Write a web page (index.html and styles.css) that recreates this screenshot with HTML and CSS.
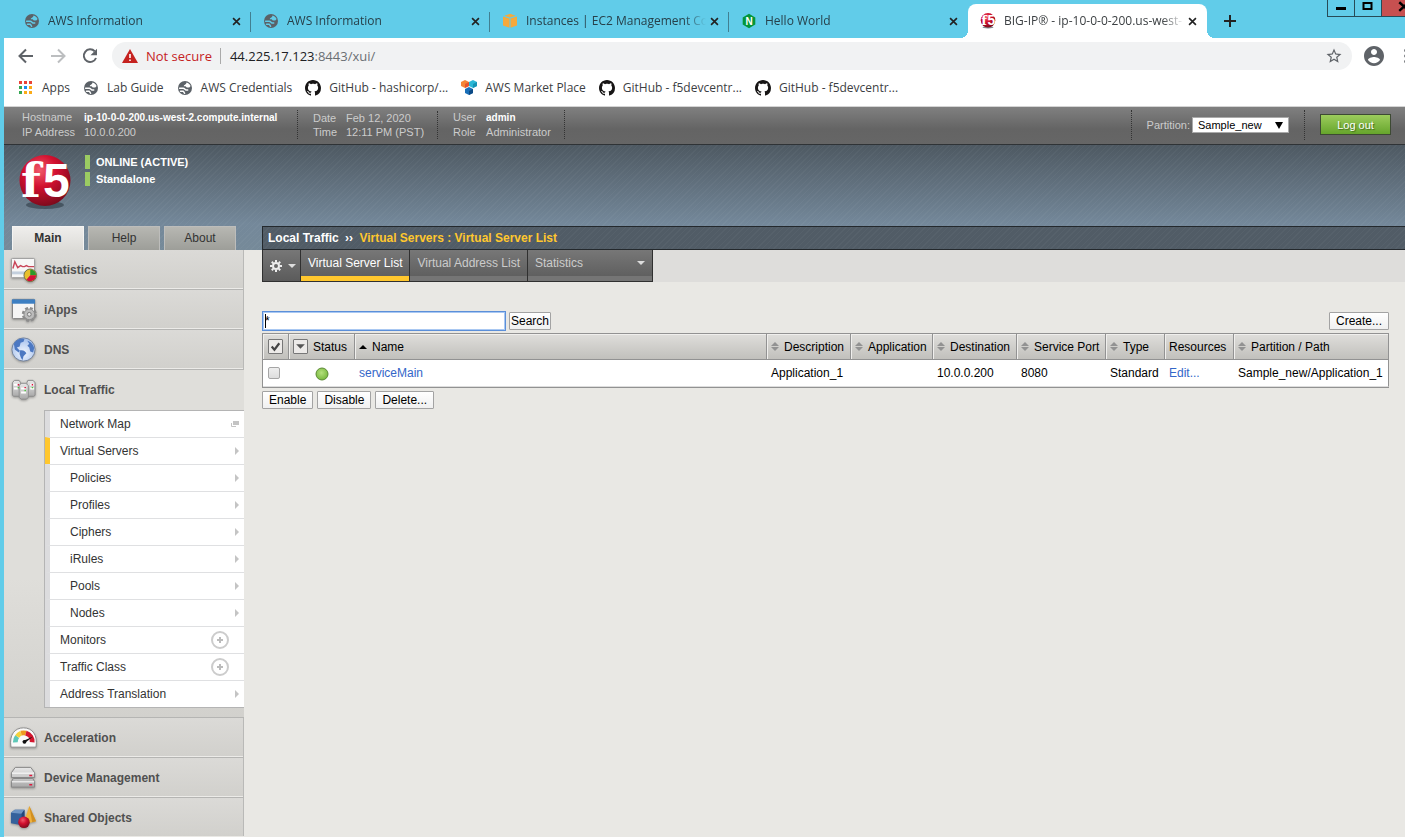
FILE: index.html
```html
<!DOCTYPE html>
<html lang="en">
<head>
<meta charset="utf-8">
<title>BIG-IP® - ip-10-0-0-200.us-west-2.compute.internal</title>
<link rel="stylesheet" href="styles.css">
</head>
<body>
<svg class="defs" width="0" height="0" aria-hidden="true">
  <defs>
    <radialGradient id="ball" cx="40%" cy="30%" r="72%">
      <stop offset="0" stop-color="#f0596b"/><stop offset=".45" stop-color="#d2102f"/><stop offset="1" stop-color="#7c0a1c"/>
    </radialGradient>
    <radialGradient id="sea" cx="50%" cy="65%" r="60%">
      <stop offset="0" stop-color="#f2f6fd"/><stop offset="1" stop-color="#a9c3ee"/>
    </radialGradient>
    <linearGradient id="metal" x1="0" x2="0" y1="0" y2="1">
      <stop offset="0" stop-color="#e8e8e8"/><stop offset="1" stop-color="#a9a9a9"/>
    </linearGradient>
    <radialGradient id="green" cx="45%" cy="40%" r="60%">
      <stop offset="0" stop-color="#b4e07c"/><stop offset="1" stop-color="#78b83e"/>
    </radialGradient>
    <symbol id="globe" viewBox="0 0 16 16">
      <circle cx="8" cy="8" r="7" fill="#5b6167"/>
      <path fill="currentColor" d="M9.500 2.500c1.900.4 3.400 1.700 4.100 3.400l-1.300 1.600H9.800L8.600 6.200H6.800c0-1.500 2.400-1.200 2.700-3.700z"/>
      <path fill="none" stroke="currentColor" stroke-width="1.500" stroke-linecap="round" d="M2.600 8.200h3.600c1.300 0 1.600 1.500 2.700 1.700h1.800M3.500 11.200h2.600c.9.200.8 1.400 1.500 2"/>
    </symbol>
    <symbol id="octocat" viewBox="0 0 16 16"><path fill="#171515" fill-rule="evenodd" d="M8 0C3.580 0 0 3.580 0 8c0 3.540 2.290 6.530 5.470 7.590.4.070.550-.170.550-.380 0-.190-.010-.820-.010-1.490-2.010.370-2.530-.490-2.690-.940-.090-.230-.480-.940-.820-1.130-.280-.150-.680-.520-.010-.530.630-.010 1.080.580 1.230.820.720 1.210 1.870.870 2.330.660.070-.520.280-.870.510-1.070-1.780-.2-3.640-.890-3.640-3.950 0-.870.310-1.590.820-2.150-.080-.2-.360-1.020.080-2.120 0 0 .670-.210 2.200.820.640-.180 1.320-.270 2-.270.680 0 1.360.090 2 .270 1.530-1.040 2.200-.820 2.200-.820.440 1.100.160 1.920.080 2.120.510.560.820 1.270.820 2.150 0 3.070-1.870 3.750-3.650 3.950.290.250.540.730.540 1.480 0 1.070-.010 1.930-.010 2.200 0 .210.150.460.550.380A8.013 8.013 0 0 0 16 8c0-4.420-3.580-8-8-8z"/></symbol>
    <symbol id="cross" viewBox="0 0 10 10"><path stroke="currentColor" stroke-width="1.800" d="M1.200 1.200l7.600 7.600M8.800 1.200L1.200 8.800"/></symbol>
    <symbol id="f5" viewBox="0 0 54 56">
      <ellipse cx="27" cy="50" rx="19" ry="4" fill="#2d3a45" opacity=".6"/>
      <circle cx="27" cy="25.500" r="25.500" fill="url(#ball)"/>
      <text x="3" y="42" font-family="DejaVu Serif" font-weight="700" font-size="46" fill="#fff">f</text>
      <text x="25" y="42" font-family="Liberation Sans" font-weight="700" font-size="48" fill="#fff">5</text>
    </symbol>
    <symbol id="plus" viewBox="0 0 18 18"><circle cx="9" cy="9" r="8" fill="#fff" stroke="#ccc" stroke-width="2"/><path d="M9 6v6M6 9h6" stroke="#bbb" stroke-width="2"/></symbol>
    <symbol id="chev" viewBox="0 0 4 8"><path d="M0 0l4 4-4 4z" fill="#c4c4c4"/></symbol>
    <symbol id="sort" viewBox="0 0 8 9"><path d="M4 0l4 4H0zM0 5h8L4 9z" fill="#929292"/></symbol>
  </defs>
</svg>

<header class="browser">
  <div class="tabstrip">
    <div class="tab"><svg class="i16"><use href="#globe"/></svg><span class="tab-title">AWS Information</span><button class="close" aria-label="Close tab"><svg><use href="#cross"/></svg></button></div>
    <div class="tab"><svg class="i16"><use href="#globe"/></svg><span class="tab-title">AWS Information</span><button class="close" aria-label="Close tab"><svg><use href="#cross"/></svg></button></div>
    <div class="tab"><svg class="i16" viewBox="0 0 16 16"><path fill="#f6a93b" d="M8 .8l5.500 1.900L8 4.600 2.500 2.700zM1 3.400l6.500 2v9.400L1 12.400zM15 3.400l-6.500 2v9.400l6.500-2.400z"/></svg><span class="tab-title">Instances | EC2 Management Con</span><button class="close" aria-label="Close tab"><svg><use href="#cross"/></svg></button></div>
    <div class="tab last"><svg class="i16" viewBox="0 0 16 16"><path fill="#049639" d="M8 .8l6.300 3.600v7.200L8 15.200l-6.300-3.600V4.400z"/><text x="4.400" y="11.800" font-family="Liberation Sans" font-weight="700" font-size="10" fill="#fff">N</text></svg><span class="tab-title">Hello World</span><button class="close" aria-label="Close tab"><svg><use href="#cross"/></svg></button></div>
    <div class="tab active"><svg class="i16"><use href="#f5"/></svg><span class="tab-title">BIG-IP® - ip-10-0-0-200.us-west-</span><button class="close" aria-label="Close tab"><svg><use href="#cross"/></svg></button></div>
    <button class="newtab" aria-label="New tab"><svg viewBox="0 0 12 12"><path d="M6 0v12M0 6h12" stroke="#222" stroke-width="2"/></svg></button>
    <div class="wincontrols">
      <button class="win min" aria-label="Minimize"><svg viewBox="0 0 26 16"><path d="M8 8.500h10" stroke="#000" stroke-width="3"/></svg></button>
      <button class="win max" aria-label="Maximize"><svg viewBox="0 0 26 16"><rect x="8.500" y="3" width="8" height="6" fill="none" stroke="#000" stroke-width="2"/></svg></button>
      <button class="win shut" aria-label="Close window"><svg viewBox="0 0 24 16"><path d="M18 2l10 9M28 2l-10 9" stroke="#000" stroke-width="2.500"/></svg></button>
    </div>
  </div>
  <div class="toolbar">
    <button class="nav" aria-label="Back"><svg viewBox="0 0 16 16"><path d="M15 8H2M8 1.500L1.500 8 8 14.500" fill="none" stroke="#5f6368" stroke-width="2"/></svg></button>
    <button class="nav" aria-label="Forward"><svg viewBox="0 0 16 16"><path d="M1 8h13M8 1.500L14.500 8 8 14.500" fill="none" stroke="#bcbec0" stroke-width="2"/></svg></button>
    <button class="nav" aria-label="Reload"><svg viewBox="0 0 16 16"><path d="M12.700 3.300A6.300 6.300 0 1 0 14 10" fill="none" stroke="#5f6368" stroke-width="2"/><path d="M15 .8v6.500H8.500z" fill="#5f6368"/></svg></button>
    <div class="omnibox">
      <svg class="warn" viewBox="0 0 16 14"><path d="M8 0l8 14H0z" fill="#c5221f"/><path d="M8 5v4M8 10.500v1.500" stroke="#fff" stroke-width="1.600"/></svg>
      <span class="notsecure">Not secure</span>
      <span class="url"><b>44.225.17.123</b>:8443/xui/</span>
      <svg class="star" viewBox="0 0 24 24"><path fill="#5f6368" d="M22 9.240l-7.190-.620L12 2 9.190 8.630 2 9.240l5.460 4.730L5.820 21 12 17.270 18.180 21l-1.630-7.030L22 9.240zM12 15.400l-3.760 2.270 1-4.280-3.320-2.880 4.380-.380L12 6.100l1.710 4.040 4.380.380-3.320 2.880 1 4.280L12 15.400z"/></svg>
    </div>
    <button class="avatar" aria-label="Profile"><svg viewBox="2 2 20 20"><path fill="#5f6368" d="M12 2C6.480 2 2 6.480 2 12s4.480 10 10 10 10-4.480 10-10S17.520 2 12 2zm0 3c1.660 0 3 1.340 3 3s-1.340 3-3 3-3-1.340-3-3 1.340-3 3-3zm0 14.200c-2.500 0-4.710-1.280-6-3.220.030-1.990 4-3.080 6-3.080 1.990 0 5.970 1.090 6 3.080-1.290 1.940-3.500 3.220-6 3.220z"/></svg></button>
    <button class="kebab" aria-label="Menu"><svg viewBox="0 0 4 16"><circle cx="2" cy="2.500" r="1.800" fill="#5f6368"/><circle cx="2" cy="8" r="1.800" fill="#5f6368"/><circle cx="2" cy="13.500" r="1.800" fill="#5f6368"/></svg></button>
  </div>
  <nav class="bookmarks">
    <a href="#"><svg class="i16" viewBox="0 0 16 16"><path fill="#ea4335" d="M1 1h3v3H1zM6 1h3v3H6zM11 1h3v3h-3z"/><path fill="#34a853" d="M1 6h3v3H1zM1 11h3v3H1z"/><path fill="#1a8df0" d="M6 6h3v3H6z"/><path fill="#fbab18" d="M11 6h3v3h-3zM6 11h3v3H6zM11 11h3v3h-3z"/></svg>Apps</a>
    <a href="#"><svg class="i16"><use href="#globe"/></svg>Lab Guide</a>
    <a href="#"><svg class="i16"><use href="#globe"/></svg>AWS Credentials</a>
    <a href="#"><svg class="i16"><use href="#octocat"/></svg>GitHub - hashicorp/...</a>
    <a href="#"><svg class="i16" viewBox="0 0 16 16"><path fill="#f58536" d="M4 0l4 2v4L4 8 0 6V2z"/><path fill="#e5532d" d="M4 4l4-2v4L4 8z"/><path fill="#2ab7d6" d="M12 0l4 2v4l-4 2-4-2V2z"/><path fill="#1593b5" d="M12 4l4-2v4l-4 2z"/><path fill="#1a6fb8" d="M8 7l4 2v4l-4 2-4-2V9z"/><path fill="#0c4a85" d="M8 11l4-2v4l-4 2z"/></svg>AWS Market Place</a>
    <a href="#"><svg class="i16"><use href="#octocat"/></svg>GitHub - f5devcentr...</a>
    <a href="#"><svg class="i16"><use href="#octocat"/></svg>GitHub - f5devcentr...</a>
  </nav>
</header>

<div class="app">
  <div class="hostbar">
    <dl class="facts host"><dt>Hostname</dt><dd><b>ip-10-0-0-200.us-west-2.compute.internal</b></dd><dt>IP Address</dt><dd>10.0.0.200</dd></dl>
    <dl class="facts time"><dt>Date</dt><dd>Feb 12, 2020</dd><dt>Time</dt><dd>12:11 PM (PST)</dd></dl>
    <dl class="facts user"><dt>User</dt><dd><b>admin</b></dd><dt>Role</dt><dd>Administrator</dd></dl>
    <div class="partition"><label for="part">Partition:</label><span class="pick"><select id="part"><option>Sample_new</option></select></span></div>
    <div class="session"><button class="logout">Log out</button></div>
  </div>

  <div class="banner">
    <div class="identity">
      <div class="brand">
        <svg class="logo"><use href="#f5"/></svg>
        <div class="state"><span>ONLINE (ACTIVE)</span><span>Standalone</span></div>
      </div>
      <div class="sidetabs"><button class="on">Main</button><button>Help</button><button>About</button></div>
    </div>
    <h1 class="crumb">Local Traffic <i>››</i> <em>Virtual Servers : Virtual Server List</em></h1>
  </div>

  <div class="body">
    <nav class="side">
      <a class="head" href="#"><svg class="ic" viewBox="0 0 28 28"><rect x="1.500" y="2.500" width="24" height="20" rx="1" fill="#f7f7f7" stroke="#999"/><path d="M2 17.500h23" stroke="#c3cfdd" stroke-width="3"/><path d="M3 13l2-7 3 6 3-2 2 1h2l2-1 2 1h6" fill="none" stroke="#c9465a" stroke-width="1.500"/><circle cx="21" cy="20" r="6.500" fill="#e9bf2b" stroke="#6b6b4b"/><path d="M21 20v-6a6 6 0 0 1 6 6z" fill="#2c9a2a"/><path d="M21 20h6a6 6 0 0 1-10 4.500z" fill="#d4103a"/></svg>Statistics</a>
      <a class="head" href="#"><svg class="ic" viewBox="0 0 28 28"><rect x="2.500" y="3.500" width="23" height="20" rx="1" fill="#f5f5f5" stroke="#777"/><path d="M2 3.500h24V8H2z" fill="#3d7fc2"/><circle cx="20" cy="19" r="6.500" fill="none" stroke="#8c8c8c" stroke-width="2.500" stroke-dasharray="3 2.100"/><circle cx="20" cy="19" r="5.500" fill="#bcbcbc" stroke="#8a8a8a"/><circle cx="20" cy="19" r="2" fill="#e4e4e4" stroke="#777"/></svg>iApps</a>
      <a class="head" href="#"><svg class="ic" viewBox="0 0 28 28"><circle cx="14" cy="14" r="12" fill="url(#sea)" stroke="#74839c"/><path fill="#4c78c2" d="M4 8c3-5 8-6 11-5l-1 3-3 1-1 4-3 1 3 3-1 2-4-3zM10 15c4-1 6 1 7 3l-3 3-1 4c-2-2-2-4-3-6zM18 5c4 1 7 5 7 8l-1 4-3-1-1-4-2-2 2-2z"/></svg>DNS</a>
      <section class="open">
        <a class="head" href="#"><svg class="ic" viewBox="0 0 28 28"><g fill="url(#metal)" stroke="#8b8b8b"><path d="M2.500 6l2-2.500h5L11 6v14h-7l-1.500-1zM17.500 6l1-2.500h5.500L26 6v13l-1.500 1h-7z"/><path d="M9.500 9l2-2.500h5L19 9v12l-2 2h-5.500l-2-2z"/></g><path d="M4 8h4M4 12h4M21 8h4M21 12h4M11.500 12h5M11.500 16h5" stroke="#fff" stroke-width="2"/><path d="M8 8h1.500M22.500 8H24M15 11h1.500" stroke="#e0143c" stroke-width="1.500"/><path d="M8 11h1.500M22.500 11H24M15 14h1.500" stroke="#4bc33e" stroke-width="1.500"/></svg>Local Traffic</a>
        <ul class="menu">
          <li><a href="#">Network Map<svg class="pop" viewBox="0 0 8 6"><path d="M2 0h6v4H2z" fill="#c4c4c4"/><path d="M.5 2v3.500H5" fill="none" stroke="#c4c4c4"/></svg></a></li>
          <li class="current"><a href="#">Virtual Servers<svg class="chev"><use href="#chev"/></svg></a></li>
          <li class="sub"><a href="#">Policies<svg class="chev"><use href="#chev"/></svg></a></li>
          <li class="sub"><a href="#">Profiles<svg class="chev"><use href="#chev"/></svg></a></li>
          <li class="sub"><a href="#">Ciphers<svg class="chev"><use href="#chev"/></svg></a></li>
          <li class="sub"><a href="#">iRules<svg class="chev"><use href="#chev"/></svg></a></li>
          <li class="sub"><a href="#">Pools<svg class="chev"><use href="#chev"/></svg></a></li>
          <li class="sub"><a href="#">Nodes<svg class="chev"><use href="#chev"/></svg></a></li>
          <li><a href="#">Monitors<svg class="add"><use href="#plus"/></svg></a></li>
          <li><a href="#">Traffic Class<svg class="add"><use href="#plus"/></svg></a></li>
          <li><a href="#">Address Translation<svg class="chev"><use href="#chev"/></svg></a></li>
        </ul>
      </section>
      <a class="head" href="#"><svg class="ic" viewBox="0 0 28 28"><path d="M1 24C-1 11 5 4 14 4s15 7 13 20z" fill="#fafafa" stroke="#888"/><g fill="none" stroke-width="5"><path d="M5.500 19a9 9 0 0 1 2-6" stroke="#5ec8b8"/><path d="M7.500 13a9 9 0 0 1 4-3.500" stroke="#f3d13c"/><path d="M11.500 9.500a9 9 0 0 1 5 0" stroke="#ee9a20"/><path d="M16.500 9.500a9 9 0 0 1 6.500 9.500" stroke="#d3172f"/></g><path d="M24 13l-9 7-2-2z" fill="#111"/><circle cx="15" cy="18.500" r="2" fill="#111"/></svg>Acceleration</a>
      <a class="head" href="#"><svg class="ic" viewBox="0 0 28 28"><g fill="url(#metal)" stroke="#858585"><path d="M1.500 9l4-5.500h16l4 5.500v5h-24zM1.500 18l2-3h20l2 3v6h-24z"/></g><path d="M2 9.500h23M2 18.500h23" stroke="#fff"/><path d="M20 12h3M20 21.500h3" stroke="#df1a3c" stroke-width="1.500"/></svg>Device Management</a>
      <a class="head" href="#"><svg class="ic" viewBox="0 0 28 28"><path d="M1 9l4-3h10v13l-3 3-11-2z" fill="#35619b"/><path d="M1 9l11 1 3-4H5z" fill="#6f95c4"/><path d="M12 10l3-4v13l-3 3z" fill="#23467a"/><path d="M20 2l7 16-8 2-4-3z" fill="#f0b23c"/><path d="M20 2l7 16-4 1z" fill="#d18f22"/><circle cx="14.500" cy="19" r="6" fill="url(#ball)"/></svg>Shared Objects</a>
    </nav>

    <main class="content">
      <div class="pagetabs">
        <button class="gear" aria-label="Options"><svg class="cog" viewBox="0 0 12 12"><circle cx="6" cy="6" r="3" fill="none" stroke="#eee" stroke-width="2"/><path d="M6 0v2M6 10v2M0 6h2M10 6h2M1.800 1.800l1.400 1.400M8.800 8.800l1.400 1.400M10.200 1.800L8.800 3.200M3.200 8.800l-1.400 1.400" stroke="#eee" stroke-width="2"/></svg><svg class="down" viewBox="0 0 8 4"><path d="M0 0h8L4 4z" fill="#ddd"/></svg></button>
        <a class="on" href="#">Virtual Server List</a>
        <a href="#">Virtual Address List</a>
        <a class="wide" href="#">Statistics<svg class="down" viewBox="0 0 8 4"><path d="M0 0h8L4 4z" fill="#ddd"/></svg></a>
      </div>

      <form class="listing">
        <div class="searchrow">
          <input type="text" class="query" value="*" aria-label="Search virtual servers">
          <button type="button" class="tight">Search</button>
          <button type="button" class="create">Create...</button>
        </div>
        <table>
          <colgroup><col class="c-check"><col class="c-status"><col><col class="c-desc"><col class="c-app"><col class="c-desc"><col class="c-port"><col class="c-type"><col class="c-res"><col class="c-path"></colgroup>
          <thead><tr>
            <th class="mid"><button type="button" class="mini" aria-label="Select all"><svg viewBox="0 0 12 12"><path d="M2.500 6l2.500 3 4.500-6" fill="none" stroke="#444" stroke-width="2"/></svg></button></th>
            <th><span class="lab"><button type="button" class="mini" aria-label="Filter status"><svg viewBox="0 0 12 12"><path d="M2 4h8L6 8z" fill="#555"/></svg></button>Status</span></th>
            <th><span class="lab"><svg class="up" viewBox="0 0 8 4"><path d="M4 0l4 4H0z" fill="#000"/></svg>Name</span></th>
            <th><span class="lab"><svg class="sort"><use href="#sort"/></svg>Description</span></th>
            <th><span class="lab"><svg class="sort"><use href="#sort"/></svg>Application</span></th>
            <th><span class="lab"><svg class="sort"><use href="#sort"/></svg>Destination</span></th>
            <th><span class="lab"><svg class="sort"><use href="#sort"/></svg>Service Port</span></th>
            <th><span class="lab"><svg class="sort"><use href="#sort"/></svg>Type</span></th>
            <th><span class="lab">Resources</span></th>
            <th><span class="lab"><svg class="sort"><use href="#sort"/></svg>Partition / Path</span></th>
          </tr></thead>
          <tbody><tr>
            <td class="tick"><input type="checkbox" aria-label="Select serviceMain"></td>
            <td class="mid"><svg class="dot" viewBox="0 0 14 14" role="img" aria-label="Available"><circle cx="7" cy="7" r="6" fill="url(#green)" stroke="#5b8a34"/></svg></td>
            <td><a href="#">serviceMain</a></td>
            <td>Application_1</td><td></td><td>10.0.0.200</td><td>8080</td><td>Standard</td><td><a href="#">Edit...</a></td><td>Sample_new/Application_1</td>
          </tr></tbody>
        </table>
        <div class="actions"><button type="button">Enable</button><button type="button">Disable</button><button type="button">Delete...</button></div>
      </form>
    </main>
  </div>
</div>
</body>
</html>
```
FILE: styles.css
```css
* { box-sizing: border-box; }
html, body { height: 100%; }
body {
  margin: 0;
  padding-left: 4px;
  display: flex;
  flex-direction: column;
  overflow: hidden;
  background: #61cce9;
  font: 12px/14px "Liberation Sans", Arial, sans-serif;
  color: #000;
}
svg { display: block; flex: none; }
.defs { position: absolute; }
button { font: inherit; cursor: pointer; }
a { text-decoration: none; }
.i16 { width: 16px; height: 16px; }

/* Browser chrome */
.browser { font: 12px/16px "Open Sans", "Noto Sans", sans-serif; color: #333; }
.tabstrip { display: flex; height: 38px; padding: 4px 0 0 8px; }
.tab {
  display: flex;
  align-items: center;
  flex: 0 1 239px;
  min-width: 0;
  padding: 0 10px 0 12px;
  position: relative;
  color: #61cce9;
}
.tab:not(.last):not(.active)::after {
  content: "";
  position: absolute;
  right: 0;
  top: 8px;
  height: 20px;
  width: 1px;
  background: #417f91;
}
.tab-title {
  flex: 1;
  margin: 0 4px 0 8px;
  white-space: nowrap;
  overflow: hidden;
  color: #27404a;
  -webkit-mask-image: linear-gradient(90deg, #000 88%, transparent);
  mask-image: linear-gradient(90deg, #000 88%, transparent);
}
.tab.active { background: #fff; border-radius: 8px 8px 0 0; color: #fff; }
.tab.active .tab-title { color: #3c4043; }
.tab.active::before,
.tab.active::after {
  content: "";
  position: absolute;
  bottom: 0;
  width: 8px;
  height: 8px;
}
.tab.active::before { left: -8px; background: radial-gradient(circle at 0 0, transparent 8px, #fff 8px); }
.tab.active::after { right: -8px; background: radial-gradient(circle at 100% 0, transparent 8px, #fff 8px); }
.close, .newtab, .nav, .avatar, .kebab { border: 0; padding: 0; background: none; }
.close { color: #222; }
.close svg { width: 9px; height: 9px; }
.newtab { margin-left: 17px; }
.newtab svg { width: 12px; height: 12px; }
.wincontrols { display: flex; margin: -4px 0 0 auto; height: 17px; }
.win {
  width: 27px;
  padding: 0;
  border: 1px solid #274b57;
  border-width: 0 0 1px 1px;
  background: none;
  overflow: hidden;
}
.win svg { width: 100%; height: 16px; }
.win.shut { background: #c75050; width: 24px; }

.toolbar {
  display: flex;
  align-items: center;
  gap: 16px;
  height: 36px;
  padding-left: 14px;
  background: #fff;
}
.nav svg { width: 16px; height: 16px; }
.omnibox {
  flex: 1;
  display: flex;
  align-items: center;
  height: 28px;
  margin-left: -2px;
  padding: 0 9px 0 10px;
  border-radius: 14px;
  background: #f1f2f3;
  font-size: 13px;
}
.warn { width: 16px; height: 14px; }
.notsecure {
  margin: 0 9px 0 8px;
  padding-right: 8px;
  border-right: 1px solid #aaa;
  color: #c5221f;
}
.url { flex: 1; color: #6b6f73; }
.url b { font-weight: 400; color: #202124; }
.star { width: 18px; height: 18px; }
.omnibox + .avatar { margin-left: -4px; }
.avatar svg { width: 20px; height: 20px; }
.kebab { width: 4px; margin: 0 -3px 0 5px; }
.kebab svg { width: 4px; height: 16px; }
.avatar + .kebab { margin-left: 4px; }

.bookmarks {
  display: flex;
  gap: 13px;
  height: 33px;
  padding: 0 0 5px 14px;
  background: #fff;
  border-bottom: 1px solid #d4d4d4;
}
.bookmarks a {
  display: flex;
  align-items: center;
  gap: 8px;
  color: #3c4043;
  white-space: nowrap;
}
.bookmarks svg { color: #fff; }

/* Host information bar */
.app { flex: 1; display: flex; flex-direction: column; background: #e9e8e4; min-height: 0; }
.hostbar {
  display: flex;
  align-items: center;
  height: 38px;
  padding-bottom: 2px;
  background: linear-gradient(#808080, #646464 60%, #666);
  border-bottom: 1px solid #2f3336;
  font-size: 11px;
  color: #ccc;
}
.facts {
  display: grid;
  margin: 0;
  padding: 0 13px 0 15px;
  border-right: 1px dotted #333;
  white-space: nowrap;
}
.host { grid-template-columns: 62px 200px; padding-left: 18px; }
.time { grid-template-columns: 33px auto; }
.user { grid-template-columns: 33px auto; }
.facts dd { margin: 0; }
.facts b { color: #fff; font-size: 10px; }
.partition, .session { display: flex; align-items: center; height: 30px; border-left: 1px dotted #333; }
.partition { margin-left: auto; padding: 0 15px; }
.partition label { margin-right: 2px; }
.pick { position: relative; display: flex; }
.pick::after {
  content: "";
  position: absolute;
  right: 6px;
  top: 5px;
  border: 4px solid transparent;
  border-top: 7px solid #000;
  border-bottom: 0;
  pointer-events: none;
}
.partition select {
  appearance: none;
  width: 97px;
  height: 16px;
  padding: 0 5px;
  border: 1px solid #aaa;
  border-radius: 0;
  background: #fff;
  color: #000;
  font: 11px/14px "Liberation Sans", Arial, sans-serif;
}
.session { padding: 0 14px 0 15px; }
.logout {
  width: 71px;
  height: 21px;
  padding: 0;
  border: 1px solid #3d4a33;
  background: linear-gradient(#9ccc5c, #66a52c);
  color: #fff;
  font-size: 11px;
  text-shadow: 1px 1px 1px #3f6a18;
}

/* Banner */
.banner {
  display: flex;
  align-items: flex-end;
  height: 105px;
  background:
    repeating-linear-gradient(135deg, rgba(255,255,255,.03) 0 1px, transparent 1px 4px),
    linear-gradient(#4e5962, #74889a 75%, #768a99);
}
.identity { width: 258px; height: 105px; display: flex; flex-direction: column; justify-content: space-between; }
.brand { display: flex; padding: 10px 0 0 14px; }
.logo { width: 54px; height: 56px; }
.state { display: grid; gap: 3px; margin-left: 13px; align-content: start; }
.state span {
  padding-left: 6px;
  border-left: 5px solid #9bcb62;
  color: #fff;
  font: bold 11px/14px "Liberation Sans", Arial, sans-serif;
}
.sidetabs { display: flex; gap: 4px; padding-left: 8px; }
.sidetabs button {
  width: 72px;
  height: 24px;
  padding: 0 0 2px;
  border: 1px solid #bdbdbb;
  border-bottom: 0;
  background: linear-gradient(#b7b7b2, #9d9e99);
  color: #333;
}
.sidetabs .on { background: linear-gradient(#efeeec, #dcdbd7); font-weight: bold; border-color: #f4f4f2; }
.crumb {
  flex: 1;
  height: 24px;
  margin: 0;
  padding-left: 5px;
  border: 1px solid #24292d;
  border-right: 0;
  background:
    repeating-linear-gradient(135deg, rgba(255,255,255,.03) 0 1px, transparent 1px 4px),
    #515c66;
  color: #fff;
  font: bold 12px/22px "Liberation Sans", Arial, sans-serif;
}
.crumb i { font-style: normal; margin: 0 3px; }
.crumb em { font-style: normal; color: #ffc72e; }

/* Side navigation */
.body { flex: 1; display: flex; min-height: 0; }
.side { width: 240px; flex: none; background: #dddcd8; border-bottom: 1px solid #e9e8e4; overflow: hidden; }
.head {
  display: flex;
  align-items: center;
  gap: 7px;
  height: 40px;
  padding-left: 6px;
  border-right: 1px solid #b9b9b7;
  border-bottom: 1px solid #b5b5b3;
  background: linear-gradient(#dbdad7, #d1d0cc);
  box-shadow: inset 0 -1px #ecebe8;
  color: #505050;
  font-weight: bold;
}
.ic { width: 27px; height: 27px; filter: drop-shadow(0 1px 1px rgba(0,0,0,.3)); }
.open { border-bottom: 1px solid #b5b5b3; padding-bottom: 9px; background: linear-gradient(#dfdeda 60%, #d2d1cd); }
.open .head { background: none; border: 0; box-shadow: none; }
.menu {
  list-style: none;
  margin: 0 0 0 40px;
  padding: 0;
  border: 1px solid #b4b4b4;
  border-right: 0;
  background: #fff;
}
.menu li { border-left: 5px solid #dcdcde; }
.menu li + li { border-top: 1px solid #dfe0e2; }
.menu .current { border-left-color: #ffc72e; }
.menu a {
  display: flex;
  align-items: center;
  justify-content: space-between;
  height: 26px;
  padding: 0 5px 0 10px;
  color: #333;
}
.menu .sub a { padding-left: 20px; }
.chev { width: 4px; height: 8px; }
.pop { width: 8px; height: 6px; }
.add { width: 18px; height: 18px; margin-right: 10px; }

/* Main content */
.content { flex: 1; min-width: 0; padding-left: 18px; }
.pagetabs { display: flex; height: 32px; background: #dedddb; }
.pagetabs > * {
  padding: 0 7px;
  border: 1px solid #303030;
  border-width: 0 1px 1px 0;
  background: linear-gradient(#777, #5b5b5b);
  box-shadow: inset 0 -5px #757575;
  color: #ccc;
  line-height: 26px;
}
.pagetabs .gear { display: flex; align-items: center; width: 39px; padding: 0 5px 0 7px; gap: 6px; border-left-width: 1px; box-shadow: none; }
.cog { width: 12px; height: 12px; }
.down { width: 8px; height: 4px; }
.pagetabs .on { color: #fff; box-shadow: inset 0 -5px #ffc72e; }
.pagetabs .wide { width: 125px; display: flex; align-items: center; justify-content: space-between; padding-bottom: 5px; }
.listing { margin: 0; padding: 29px 16px 0 0; }
.searchrow { display: flex; align-items: center; gap: 3px; margin-bottom: 2px; }
.query {
  width: 244px;
  height: 20px;
  padding: 0 2px;
  border: 1px solid #5b8fd9;
  outline: 1px solid #a9c8f2;
  outline-offset: -2px;
  background: linear-gradient(#000, #000) 2px 2px / 1px 14px no-repeat #fff;
  font: 12px/14px "Liberation Sans", Arial, sans-serif;
}
.listing button {
  height: 18px;
  padding: 0 6px;
  border: 1px solid #a3a3a3;
  border-radius: 1px;
  background: linear-gradient(#fff, #f0f0f0);
  color: #000;
  line-height: 14px;
}
.listing .tight { padding: 0 1px; }
.listing .create { margin-left: auto; }
table {
  width: 100%;
  table-layout: fixed;
  border-spacing: 0;
  border: 1px solid #929292;
  border-right: 0;
  background: #fff;
}
.c-check { width: 26px; }
.c-status { width: 66px; }
.c-desc { width: 84px; }
.c-app { width: 82px; }
.c-port { width: 89px; }
.c-type { width: 59px; }
.c-res { width: 69px; }
.c-path { width: 155px; }
th {
  height: 26px;
  padding: 0 4px;
  border: 1px solid #929292;
  border-width: 0 1px 1px 0;
  background: linear-gradient(#dfdedb, #c1c0bc);
  box-shadow: inset 1px 1px #f0efed;
  font-weight: 400;
  text-align: left;
  white-space: nowrap;
}
td { height: 27px; padding: 0 4px; white-space: nowrap; border-bottom: 1px solid #ddd; }
td:last-child { border-right: 1px solid #929292; }
td a { color: #3366c8; }
.mid { text-align: center; padding: 0; }
.lab { display: flex; align-items: center; gap: 5px; }
.up { width: 8px; height: 4px; }
.sort { width: 8px; height: 9px; }
.listing .mini { width: 15px; height: 15px; padding: 0; border-color: #777; background: #eceae8; }
.mid .mini { display: block; margin: 0 auto; }
.mini svg { width: 13px; height: 13px; }
.dot { width: 14px; height: 14px; margin: 2px auto 0; }
.tick { padding: 0 5px; }
.tick input {
  appearance: none;
  display: block;
  width: 12px;
  height: 12px;
  margin: 0;
  border: 1px solid #a5a5a5;
  border-radius: 2px;
  background: linear-gradient(#eee, #ddd);
}
.actions { display: flex; gap: 4px; margin-top: 3px; }
```
